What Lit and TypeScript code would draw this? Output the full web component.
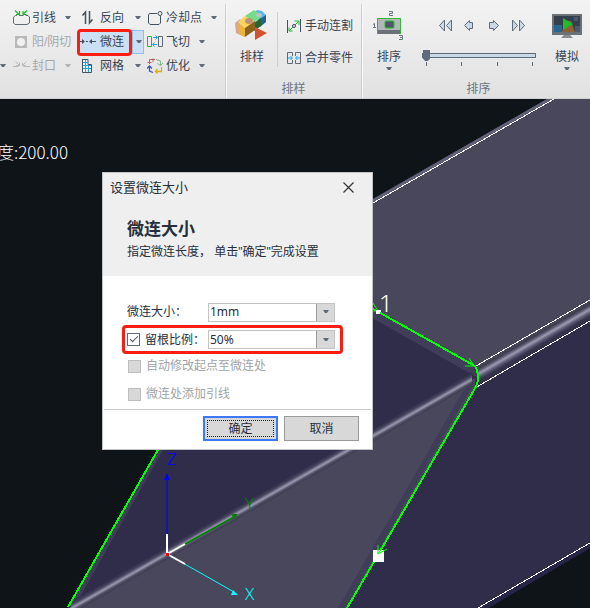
import { LitElement, html, svg, css, nothing, TemplateResult } from "lit";
import { customElement, property } from "lit/decorators.js";

const caretIcon = html`<svg width="6" height="4" viewBox="0 0 6 4" aria-hidden="true"><path d="M0 0H6L4 3H2Z" fill="#5f6b78"/></svg>`;

const icons: Record<string, TemplateResult> = {
  lead: svg`<svg width="17" height="16" viewBox="0 0 17 16" fill="none"><path d="M4 5.500H2.500L.500 7V13L2 14.500H14L16.500 13V7L15 5.500H12.500" stroke="#5f6b78"/><path d="M6 5.500H10.500" stroke="#5f6b78"/><path d="M2 .500L6 4.500M3 4.500H6.500V1M14 .500L10 4.500M13.500 4.500H10V1" stroke="#1fb92c" stroke-width="1.200"/></svg>`,
  yinyang: svg`<svg width="17" height="16" viewBox="0 0 17 16"><rect x="2" y="2" width="12" height="12" fill="#b9b9b9"/><circle cx="8" cy="8" r="4" fill="#f1f1f1"/></svg>`,
  seal: svg`<svg width="17" height="16" viewBox="0 0 17 16" fill="none" stroke="#b8b8b8"><path d="M0 8.500H5.500M10.500 8.500H17M2.500 3.500L6.500 7.500M3.500 7.500H6.500V4.500M13.500 3.500L9.500 7.500M12.500 7.500H9.500V4.500"/></svg>`,
  reverse: svg`<svg width="14" height="16" viewBox="0 0 14 16" fill="none" stroke="#44515e" stroke-width="1.500"><path d="M4.500 14V2L1.500 5.500M8.500 1V13L11.500 9.500"/></svg>`,
  micro: svg`<svg width="17" height="16" viewBox="0 0 17 16"><path d="M0 7H3V5L6 7.500L3 10V8H0ZM17 7H13V5L10 7.500L13 10V8H17ZM7 7H9V8H7Z" fill="#44515e"/></svg>`,
  grid: svg`<svg width="13" height="16" viewBox="0 0 13 16" fill="none"><path d="M1 1.500H7V6.500H10.500V14.500H1.500V1" fill="#eef7fd" stroke="#44515e"/><path d="M4.500 2V14M7.500 7V14M2 4.500H7M2 7.500H10M2 10.500H10" stroke="#19a5e8"/></svg>`,
  cooling: svg`<svg width="16" height="16" viewBox="0 0 16 16" fill="none" stroke="#44515e"><path d="M9 3.500H1.500L.500 5V13L2 14.500H11L12.500 13V6"/><circle cx="12" cy="3.500" r="2"/></svg>`,
  fly: svg`<svg width="17" height="16" viewBox="0 0 17 16" fill="none"><path d="M.500 2.500H4.500V12.500H.500Z" stroke="#1fb92c"/><path d="M11.500 2.500H15.500V12.500H11.500Z" stroke="#5f6b78"/><path d="M6 3.500H10M8.500 1.500L10.500 3.500L8.500 5.500M10 10.500H6M7.500 8.500L5.500 10.500L7.500 12.500" stroke="#19a5e8"/></svg>`,
  optimize: svg`<svg width="17" height="16" viewBox="0 0 17 16" fill="none"><path d="M2.500 6V1.500H8M6 .500V4M.500 4.500H4.500" stroke="#b9606b"/><path d="M9 1.500L13.500 3V7M10.500 5.500L13.500 7.500L16 5" stroke="#79b68a"/><path d="M14.500 9V13.500H8.500M10.500 11L8.500 13.500L10.500 15.500" stroke="#d9ad13" stroke-width="1.300"/><path d="M6 14.500L2.500 13V8M0 10.500L2.500 8L5 10.500" stroke="#3e57b0" stroke-width="1.300"/></svg>`,
  nest: svg`<svg width="34" height="34" viewBox="0 0 34 34">
    <path d="M0 14L5 10L10 19V28L1 24Z" fill="#d8a596"/><path d="M22 1L27 2L31 6V13L26 16L19 4Z" fill="#58b5f2"/><path d="M31 6V13L25 18V10Z" fill="#24648c"/>
    <path d="M10 7L19 1L27 7L19 14Z" fill="#74de86"/><path d="M26 9V17L19 22V14Z" fill="#22672f"/>
    <path d="M3 13L10 7L20 13L10 20Z" fill="#fbd65c"/><path d="M3 15L10 19V28L4 25Z" fill="#eab43a"/><path d="M10 19L20 12V21L10 28Z" fill="#8a6320"/>
    <ellipse cx="14" cy="12" rx="4" ry="3" fill="#c08f7c"/><ellipse cx="24" cy="6" rx="3" ry="2" fill="#b9c3c4"/><path d="M20 18L32 24L20 31Z" fill="#d2532f"/></svg>`,
  manual: svg`<svg width="14" height="14" viewBox="0 0 14 14" fill="none"><path d="M.500 1V14M13.500 0V13" stroke="#44515e"/><path d="M2 12L11.500 2.500M7.500 2H12V6M2 8.500V12H5.500" stroke="#1fb92c"/><circle cx="7" cy="7" r="1.500" fill="#eee" stroke="#44515e"/></svg>`,
  merge: svg`<svg width="14" height="12" viewBox="0 0 14 12" fill="none"><path d="M5.500 4V.500H.500V11.500H5.500V8M8.500 4V.500H13.500V11.500H8.500V8" stroke="#5f6b78"/><path d="M1 6H5M3.500 4L5.500 6L3.500 8M13 6H9M10.500 4L8.500 6L10.500 8" stroke="#19a5e8"/></svg>`,
  order: svg`<svg width="34" height="34" viewBox="0 0 34 34"><rect x="5" y="9" width="24" height="13" fill="#b3b7ba"/><rect x="5" y="21" width="24" height="4" fill="#6b7176"/><path d="M5.500 25V9.500H28.500V25" fill="none" stroke="#30b836"/><rect x="13" y="12" width="9" height="7" rx="1" fill="#4d5966" stroke="#25c22b"/>
    <g fill="none" stroke="#6a7683"><path d="M17 2.500H20.500V4.500H17.500V6.500H21M1 15.500L2.500 14.500V18.500M1 18.500H4M27 26.500H30.500V30.500H27M28 28.500H30"/></g></svg>`,
  simulate: svg`<svg width="32" height="26" viewBox="0 0 32 26"><rect x="1" y="1" width="30" height="21" fill="#6c7176"/><rect x="3" y="3" width="26" height="16" fill="#34404d"/><path d="M3 12H11V19H3Z" fill="#27648e"/><path d="M11 19L15 8H20L24 19Z" fill="#8c6136"/><path d="M23 4H27V8H23ZM24 13H29V19H24Z" fill="#4a5a70"/><path d="M12 5L22 11L12 17Z" fill="#20bd28"/><path d="M13 22H19L22 25H10Z" fill="#878c91"/></svg>`,
  first: svg`<svg width="14" height="13" viewBox="0 0 14 13" fill="#cbd8e5" stroke="#5f6b78"><path d="M5.500 1V12L.500 6.500Z M12.500 1V12L7.500 6.500Z"/></svg>`,
  prev: svg`<svg width="14" height="13" viewBox="0 0 14 13" fill="#cbd8e5" stroke="#5f6b78"><path d="M6.500 1.500L1.500 6.500L6.500 11.500V9.500H9.500V3.500H6.500Z"/></svg>`,
  next: svg`<svg width="14" height="13" viewBox="0 0 14 13" fill="#cbd8e5" stroke="#5f6b78"><path d="M6.500 1.500L11.500 6.500L6.500 11.500V9.500H2.500V3.500H6.500Z"/></svg>`,
  last: svg`<svg width="14" height="13" viewBox="0 0 14 13" fill="#cbd8e5" stroke="#5f6b78"><path d="M1.500 1V12L6.500 6.500Z M8.500 1V12L13.500 6.500Z"/></svg>`,
};

const buttonReset = css`
  button { font: inherit; color: inherit; background: none; border: 0; padding: 0; margin: 0; }
  svg { display: block; flex: none; }
`;

@customElement("split-tool")
class SplitTool extends LitElement {
  @property() icon = "";
  @property() label = "";
  @property({ type: Boolean, reflect: true }) off = false;
  @property({ type: Boolean, reflect: true }) selected = false;
  @property({ type: Boolean }) nomenu = false;

  static styles = [buttonReset, css`
    :host { display: flex; height: 24px; color: #3a4552; position: relative; box-sizing: border-box; }
    :host([off]) { color: #a5a8ab; }
    :host([off]) .menu { opacity: .4; }
    .main { flex: 1; display: grid; grid-template-columns: 17px auto; justify-content: start; align-items: center; gap: var(--gap, 2px); padding: 0 6px 0 1px; white-space: nowrap; }
    .main svg { justify-self: center; }
    .menu { width: 12px; display: flex; align-items: center; justify-content: center; }
    :host([selected]) { background: #cbe0f5; box-shadow: inset 0 0 0 1px #8cc0f2; }
    :host([selected]) .menu { border-left: 1px solid #8cc0f2; }
    :host([selected])::after { content: ""; position: absolute; left: -1px; top: -1px; width: 49px; height: 21px; border: 3px solid #fb1d12; border-radius: 4px; }
  `];

  render() {
    return html`
      <button class="main" ?disabled=${this.off}>${icons[this.icon]}<span>${this.label}</span></button>
      ${this.nomenu ? nothing : html`<button class="menu" aria-label="${this.label}" ?disabled=${this.off}>${caretIcon}</button>`}
    `;
  }
}

@customElement("ribbon-bar")
class RibbonBar extends LitElement {
  static styles = [buttonReset, css`
    :host { display: flex; overflow: hidden; box-sizing: border-box; height: 99px; padding-top: 4px;
      background: linear-gradient(#f3f3f3, #e1e1e1); border-bottom: 1px solid #d0d0d0; color: #3a4552; }
    .group { flex: none; display: flex; flex-direction: column; box-sizing: border-box; border-right: 1px solid #cfcfcf; box-shadow: 1px 0 #f7f7f7; }
    .tools { width: 226px; padding-top: 2px; }
    .nesting { width: 136px; }
    .sequence { width: 234px; }
    .tool-grid { display: grid; grid-template-columns: 12px 66px 68px 1fr; grid-auto-rows: 24px; }
    .tool-grid split-tool { justify-self: start; }
    .tool-grid .second { --gap: 4px; width: 66px; }
    .edge { grid-row: 3; display: flex; align-items: center; }
    .body { height: 75px; display: flex; }
    .caption { text-align: center; color: #6b7683; line-height: 18px; padding-top: 1px; }
    .big { display: flex; flex-direction: column; align-items: center; width: 44px; padding-top: 5px; }
    .pic { height: 34px; display: flex; align-items: center; margin-bottom: 5px; }
    .big span { line-height: 18px; margin-bottom: 1px; }
    .nesting .big { margin-left: 4px; }
    .pair { margin: 8px 0 12px 3px; padding-left: 9px; border-left: 1px solid #cfcfcf; display: grid; grid-auto-rows: 32px; align-content: center; }
    .pair button { display: flex; align-items: center; gap: 4px; padding-top: 4px; white-space: nowrap; }
    .sequence .body { padding-left: 5px; }
    .player { width: 134px; box-sizing: border-box; padding: 15px 9px 0 11px; }
    .keys { display: flex; justify-content: space-between; padding: 0 11px 0 17px; margin-bottom: 18px; }
    input { appearance: none; display: block; width: 100%; height: 11px; margin: 0; background: none; }
    input::-webkit-slider-runnable-track { height: 5px; box-sizing: border-box; border: 1px solid #5f6b78; background: #cbd8e5; }
    input::-webkit-slider-thumb { appearance: none; width: 7px; height: 11px; margin-top: -4px; background: #5f6b78; clip-path: polygon(0 0, 100% 0, 100% 80%, 70% 100%, 30% 100%, 0 80%); }
    .ticks { display: flex; justify-content: space-between; padding: 1px 3px 0 4px; }
    .ticks i { width: 1px; height: 4px; background: #5f6b78; }
  `];

  render() {
    return html`
      <section class="group tools">
        <div class="tool-grid">
          <span></span>
          <split-tool icon="lead" label="引线"></split-tool>
          <split-tool class="second" icon="reverse" label="反向"></split-tool>
          <split-tool icon="cooling" label="冷却点"></split-tool>
          <span></span>
          <split-tool icon="yinyang" label="阳/阴切" off nomenu></split-tool>
          <split-tool class="second" icon="micro" label="微连" selected></split-tool>
          <split-tool icon="fly" label="飞切"></split-tool>
          <button class="edge" aria-label="更多">${caretIcon}</button>
          <split-tool icon="seal" label="封口" off></split-tool>
          <split-tool class="second" icon="grid" label="网格"></split-tool>
          <split-tool icon="optimize" label="优化"></split-tool>
        </div>
      </section>
      <section class="group nesting">
        <div class="body">
          <button class="big"><div class="pic">${icons.nest}</div><span>排样</span></button>
          <div class="pair">
            <button>${icons.manual}<span>手动连割</span></button>
            <button>${icons.merge}<span>合并零件</span></button>
          </div>
        </div>
        <div class="caption">排样</div>
      </section>
      <section class="group sequence">
        <div class="body">
          <button class="big"><div class="pic">${icons.order}</div><span>排序</span>${caretIcon}</button>
          <div class="player">
            <div class="keys">
              <button aria-label="最前">${icons.first}</button>
              <button aria-label="上一个">${icons.prev}</button>
              <button aria-label="下一个">${icons.next}</button>
              <button aria-label="最后">${icons.last}</button>
            </div>
            <input type="range" min="0" max="100" value="0" aria-label="排序" />
            <div class="ticks"><i></i><i></i><i></i><i></i></div>
          </div>
          <button class="big"><div class="pic">${icons.simulate}</div><span>模拟</span>${caretIcon}</button>
        </div>
        <div class="caption">排序</div>
      </section>
    `;
  }
}

@customElement("tube-scene")
class TubeScene extends LitElement {
  static styles = css`
    :host { display: block; }
    svg { display: block; width: 100%; height: 100%; }
    .edge { stroke: #fff; stroke-width: 1; shape-rendering: crispEdges; }
    .path { stroke: #0f0; stroke-width: 2; fill: none; shape-rendering: crispEdges; }
    .head { stroke: #0f0; stroke-width: 1; fill: none; }
    .stem { stroke: #fff; stroke-width: 2; fill: none; }
    .axis { font: 17px "Noto Sans", sans-serif; font-weight: 300; }
    .readout { font: 17px "Noto Sans CJK SC", sans-serif; font-weight: 300; fill: #fff; }
    .index { font: 24px "Noto Sans", sans-serif; font-weight: 300; fill: #fff; }
  `;

  render() {
    return html`
      <svg viewBox="0 99 590 509" preserveAspectRatio="xMinYMin slice" role="img" aria-label="3D">
        <defs>
          <linearGradient id="far" gradientUnits="userSpaceOnUse" x1="590" y1="300" x2="599.100" y2="315.750">
            <stop offset="0" stop-color="#48475b"/><stop offset=".2" stop-color="#3f3d50"/><stop offset=".3" stop-color="#5a5970"/>
            <stop offset=".44" stop-color="#9c9bb4"/><stop offset=".6" stop-color="#5c5a74"/><stop offset=".76" stop-color="#37354e"/><stop offset="1" stop-color="#2f2d49"/>
          </linearGradient>
          <linearGradient id="near" gradientUnits="userSpaceOnUse" x1="370" y1="430.750" x2="376" y2="441.250">
            <stop offset="0" stop-color="#2f2d49"/><stop offset=".25" stop-color="#45435d"/><stop offset=".5" stop-color="#9b9ab2"/>
            <stop offset=".7" stop-color="#504e65"/><stop offset=".85" stop-color="#403e53"/><stop offset="1" stop-color="#48475b"/>
          </linearGradient>
        </defs>
        <rect y="99" width="590" height="509" fill="#0f1418"/>
        <path d="M300 241L547 99H590V548L488 608H68L157 450L300 241Z" fill="#2f2d49"/>
        <path d="M300 241L547 99H590V300L476 366L300 266Z" fill="#48475b"/>
        <path d="M300 241L547 99H554L300 245Z" fill="#625f7b"/>
        <path d="M590 300L476 366L478 387L590 321Z" fill="url(#far)"/>
        <path d="M590 543L478 608H488L590 548Z" fill="#26244a"/>
        <path d="M475 378L75 608H347L475 388Z" fill="#48475b"/>
        <path d="M300 268L476 366L478 378L300 277Z" fill="#403d58"/>
        <path d="M157 450H163L77 602L68 608Z" fill="#403d58"/>
        <path d="M476 380L345 608H338L463 391Z" fill="#403d58"/>
        <path d="M472 372V385L83 608H70L75 599Z" fill="url(#near)"/>
        <path class="edge" d="M300 245L554 99M590 300L476 366M590 321L475 388M590 543L478 608"/>
        <path class="path" d="M300 268L475 366Q478 371 478 378Q478 384 474 390L347 608M159 448L68 607"/>
        <path class="head" d="M469 358L474 366H465M373 303L378 311H373"/>
        <rect x="373" y="550" width="11" height="12" fill="#fff"/>
        <path class="head" d="M378 545V554L387 549M378 554L382 548"/>
        <path d="M376 310H381V312H380V314H376Z" fill="#fff"/>
        <text class="index" x="379" y="312">1</text>
        <path d="M167 554V478" stroke="#00f"/><path d="M167 473L170 480H164Z" fill="#00f"/>
        <path d="M167 554L234 517" stroke="#008000" stroke-width="1.500"/><path d="M238 514L234 519L231 514Z" fill="#008000"/>
        <path d="M167 554L234 592" stroke="#0ff"/><path d="M238 595L231 595L233 590Z" fill="#0ff"/>
        <path class="stem" d="M167 534V554L185 544M167 554L185 564"/>
        <rect x="166" y="553" width="3" height="3" fill="#f00"/>
        <text class="axis" x="167" y="465" fill="#00f">Z</text>
        <text class="axis" x="245" y="510" fill="#008000">Y</text>
        <text class="axis" x="245" y="600" fill="#0ff">X</text>
        <text class="readout" x="-3" y="159">度:200.00</text>
      </svg>
    `;
  }
}

@customElement("micro-dialog")
class MicroDialog extends LitElement {
  static styles = [buttonReset, css`
    :host { display: block; box-sizing: border-box; border: 1px solid #c3c3c3; background: #fff; color: #26303b; }
    header { background: #efefef; padding: 0 7px 14px; }
    .bar { display: flex; justify-content: space-between; align-items: center; height: 29px; font-size: 13px; padding-right: 11px; }
    h1 { font-size: 17px; line-height: 24px; margin: 16px 0 0 17px; }
    p { margin: 0 0 0 17px; line-height: 20px; white-space: nowrap; }
    form { padding: 26px 12px 1px 19px; display: grid; }
    .row { display: grid; grid-template-columns: 81px 127px; align-items: center; height: 20px; padding: 0 5px; }
    .marked { border: 3px solid #fb1d12; border-radius: 4px; width: 208px; height: 23px; padding: 0 5px 0 2px; margin-top: 3px; }
    label { display: flex; align-items: center; gap: 5px; white-space: nowrap; }
    .check { height: 28px; padding-left: 6px; color: #a0a3a6; }
    .first { margin-top: -2px; }
    .tick { appearance: none; flex: none; width: 13px; height: 13px; margin: 0; border: 1px solid #5f6b78; background: #fff; display: grid; }
    .tick:checked::after { content: ""; width: 7px; height: 3px; margin: 2px 0 0 2px; border: solid #44515e; border-width: 0 0 1px 1px; transform: rotate(-45deg); }
    .tick:disabled { background: #d8d8d8; border-color: #bdbdbd; }
    .combo { display: grid; grid-template-columns: 1fr 18px; height: 19px; box-sizing: border-box; border: 1px solid #c3c3c3; background: #fff; }
    select { grid-area: 1 / 1 / 2 / 3; appearance: none; font: 12px/16px "Noto Sans", sans-serif; color: #26303b; border: 0; background: none; padding: 0 20px 0 1px; margin: 0; z-index: 1; min-width: 0; }
    .drop { grid-area: 1 / 2; background: #d8d8d8; border-left: 1px solid #9a9a9a; display: flex; align-items: center; justify-content: center; }
    footer { display: flex; justify-content: flex-end; gap: 6px; margin: 0 1px; border-top: 1px solid #c9c9c9; padding: 6px 12px 8px; }
    footer button { width: 75px; height: 25px; background: #d8d8d8; border: 1px solid #999; }
    footer .ok { border: 2px solid #3c78f8; outline: 1px dotted #222; outline-offset: -5px; }
  `];

  render() {
    return html`
      <header>
        <div class="bar"><span>设置微连大小</span>
          <button aria-label="关闭"><svg width="11" height="11" viewBox="0 0 11 11"><path d="M.500 .500L10.500 10.500M10.500 .500L.500 10.500" stroke="#333" stroke-width="1.200"/></svg></button>
        </div>
        <h1>微连大小</h1>
        <p>指定微连长度， 单击"确定"完成设置</p>
      </header>
      <form>
        <div class="row">
          <label for="size">微连大小：</label>
          <div class="combo"><select id="size"><option>1mm</option></select><span class="drop">${caretIcon}</span></div>
        </div>
        <div class="row marked">
          <label><input class="tick" type="checkbox" checked />留根比例：</label>
          <div class="combo"><select id="ratio" aria-label="留根比例"><option>50%</option></select><span class="drop">${caretIcon}</span></div>
        </div>
        <label class="check first"><input class="tick" type="checkbox" disabled />自动修改起点至微连处</label>
        <label class="check"><input class="tick" type="checkbox" disabled />微连处添加引线</label>
      </form>
      <footer><button class="ok">确定</button><button>取消</button></footer>
    `;
  }
}

@customElement("app-root")
class AppRoot extends LitElement {
  static styles = css`
    :host { display: flex; flex-direction: column; min-height: 100vh; background: #0f1418; font: 12px/16px "Liberation Sans", "Noto Sans CJK SC", sans-serif; }
    main { flex: 1; position: relative; display: grid; min-height: 360px; overflow: hidden; }
    tube-scene { position: absolute; inset: 0; }
    micro-dialog { position: absolute; left: 102px; top: 73px; width: 271px; }
  `;

  render() {
    return html`
      <ribbon-bar></ribbon-bar>
      <main>
        <tube-scene></tube-scene>
        <micro-dialog role="dialog" aria-label="设置微连大小"></micro-dialog>
      </main>
    `;
  }
}
